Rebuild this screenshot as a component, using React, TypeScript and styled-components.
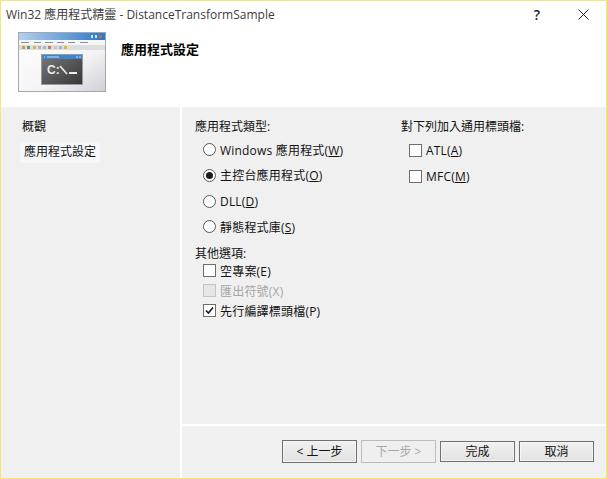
import React from "react";
import styled, { createGlobalStyle } from "styled-components";

const GlobalStyle = createGlobalStyle`
    html, body {
        margin: 0;
        padding: 0;
        width: 607px;
        height: 479px;
        overflow: hidden;
        background: #ffffff;
    }
`;

const FONT = `"Open Sans", "Noto Sans CJK TC", sans-serif`;

const Window = styled.div`
    box-sizing: border-box;
    width: 607px;
    height: 479px;
    display: flex;
    flex-direction: column;
    border: 1px solid #f0e97a;
    font-family: ${FONT};
    font-size: 12px;
    color: #111111;
    background: #ffffff;
`;

const TitleBar = styled.div`
    box-sizing: border-box;
    height: 29px;
    display: flex;
    align-items: center;
    padding: 0 0 3px 5px;
    flex: none;
`;

const TitleText = styled.div`
    flex: 1;
    font-size: 12px;
    color: #3c3c3c;
    white-space: nowrap;
`;

const TitleButton = styled.div`
    width: 46px;
    height: 26px;
    display: flex;
    align-items: center;
    justify-content: center;
    font-size: 14px;
    font-weight: 600;
    color: #222222;
`;

const Header = styled.div`
    box-sizing: border-box;
    height: 77px;
    flex: none;
    display: flex;
    align-items: flex-start;
    padding: 2px 0 0 17px;
    gap: 15px;
`;

const HeaderTitle = styled.div`
    margin-top: 7px;
    font-size: 13px;
    font-weight: 700;
    color: #000000;
`;

const Body = styled.div`
    flex: 1;
    display: flex;
    background: #f0f0f0;
    min-height: 0;
`;

const Sidebar = styled.div`
    width: 181px;
    flex: none;
    box-sizing: border-box;
    border-right: 2px solid #ffffff;
    padding: 10px 0 0 21px;
`;

const SideHeading = styled.div`
    height: 20px;
    line-height: 20px;
`;

const SideItem = styled.div`
    margin: 5px 0 0 -2px;
    width: 76px;
    height: 21px;
    line-height: 19px;
    padding-left: 4px;
    background: #f5f7fb;
    border-radius: 2px;
`;

const Content = styled.div`
    flex: 1;
    display: flex;
    flex-direction: column;
    min-width: 0;
`;

const Options = styled.div`
    flex: 1;
    display: grid;
    grid-template-columns: 206px 1fr;
    padding: 11px 0 0 13px;
`;

const Column = styled.div`
    display: flex;
    flex-direction: column;
`;

const GroupLabel = styled.div<{ $top?: number; $h?: number }>`
    height: ${(p) => p.$h ?? 19}px;
    line-height: 18px;
    margin-top: ${(p) => p.$top ?? 0}px;
`;

const OptionRow = styled.label<{ $h: number; $disabled?: boolean }>`
    display: flex;
    align-items: center;
    gap: 4px;
    height: ${(p) => p.$h}px;
    padding-left: 8px;
    color: ${(p) => (p.$disabled ? "#a6a6a6" : "#111111")};
`;

const RadioMark = styled.span<{ $on?: boolean }>`
    box-sizing: border-box;
    width: 13px;
    height: 13px;
    flex: none;
    border-radius: 50%;
    border: 1px solid #5a5a5a;
    background: #ffffff;
    display: flex;
    align-items: center;
    justify-content: center;
    &::after {
        content: "";
        width: 7px;
        height: 7px;
        border-radius: 50%;
        background: ${(p) => (p.$on ? "#1c1c1c" : "transparent")};
    }
`;

const CheckMark = styled.span<{ $disabled?: boolean }>`
    box-sizing: border-box;
    width: 13px;
    height: 13px;
    flex: none;
    border: 1px solid ${(p) => (p.$disabled ? "#c4c4c4" : "#6e6e6e")};
    background: ${(p) => (p.$disabled ? "#e6e6e6" : "#ffffff")};
    display: flex;
    align-items: center;
    justify-content: center;
    svg {
        display: block;
    }
`;

const OptionText = styled.span`
    white-space: nowrap;
    letter-spacing: 0.2px;
`;

const Key = styled.span`
    text-decoration: underline;
    text-underline-offset: 1px;
`;

const Footer = styled.div`
    box-sizing: border-box;
    flex: none;
    height: 54px;
    border-top: 2px solid #ffffff;
    display: flex;
    align-items: flex-start;
    justify-content: flex-end;
    gap: 4px;
    padding: 14px 12px 0 0;
`;

const Button = styled.div<{ $tall?: boolean; $disabled?: boolean }>`
    box-sizing: border-box;
    width: 75px;
    height: ${(p) => (p.$tall ? 23 : 21)}px;
    margin-top: ${(p) => (p.$tall ? 0 : 1)}px;
    padding-bottom: 2px;
    display: flex;
    align-items: center;
    justify-content: center;
    border: 1px solid ${(p) => (p.$disabled ? "#bcbcbc" : "#707070")};
    background: ${(p) => (p.$disabled ? "#efefef" : "linear-gradient(#f0f0f0, #e3e3e3)")};
    box-shadow: inset 0 0 0 1px ${(p) => (p.$disabled ? "#f0f0f0" : "#f4f4f4")};
    color: ${(p) => (p.$disabled ? "#a8a8a8" : "#111111")};
`;

const AppIcon = () => (
    <svg width="88" height="60" viewBox="0 0 88 60">
        <defs>
            <linearGradient id="bar" x1="0" x2="1" y1="0" y2="0">
                <stop offset="0" stopColor="#b4cfec" />
                <stop offset="1" stopColor="#2b78c8" />
            </linearGradient>
            <linearGradient id="page" x1="0" x2="1" y1="0" y2="1">
                <stop offset="0" stopColor="#ffffff" />
                <stop offset="0.6" stopColor="#f4f4f6" />
                <stop offset="1" stopColor="#cfcfd6" />
            </linearGradient>
            <linearGradient id="term" x1="0" x2="1" y1="0" y2="1">
                <stop offset="0" stopColor="#7a7a7a" />
                <stop offset="1" stopColor="#363636" />
            </linearGradient>
        </defs>
        <rect x="0.5" y="0.5" width="87" height="59" fill="url(#page)" stroke="#a3a7b0" />
        <rect x="1" y="1" width="86" height="7" fill="url(#bar)" />
        <rect x="73" y="3" width="2" height="3" fill="#cfe0f2" />
        <rect x="77" y="3" width="2" height="3" fill="#cfe0f2" />
        <rect x="81" y="3" width="3" height="3" fill="#c8694e" />
        <rect x="1" y="8" width="86" height="5" fill="#f6f6f6" />
        <path d="M3 10.5h8M16 10.5h7M27 10.5h8M39 10.5h7M50 10.5h7M62 10.5h8" stroke="#8f8f8f" strokeWidth="1" />
        <rect x="1" y="13" width="86" height="5" fill="#dedede" />
        <rect x="4" y="14" width="3" height="3" fill="#d89a4c" />
        <rect x="9" y="14" width="3" height="3" fill="#5f9a7a" />
        <rect x="15" y="14" width="3" height="3" fill="#d9b35a" />
        <rect x="20" y="14" width="3" height="3" fill="#b5b5b5" />
        <rect x="25" y="14" width="3" height="3" fill="#b5b5b5" />
        <rect x="30" y="14" width="3" height="3" fill="#d07a4a" />
        <rect x="36" y="14" width="3" height="3" fill="#c9c9c9" />
        <rect x="41" y="14" width="3" height="3" fill="#b5b5b5" />
        <rect x="46" y="14" width="3" height="3" fill="#e0b93a" />
        <rect x="23.5" y="22.5" width="41" height="30" fill="url(#term)" stroke="#9a9a9a" />
        <rect x="24" y="23" width="40" height="4" fill="#3a86d0" />
        <path d="M26 25h1M29 25h12M58 25h2M61 25h2" stroke="#cfe0f2" />
        <text x="29" y="42" fontFamily="'Liberation Sans', sans-serif" fontSize="12" fontWeight="700" fill="#ececec">
            C:
        </text>
        <path d="M42 34l7 8" stroke="#ececec" strokeWidth="1.6" />
        <rect x="51" y="40" width="8" height="2" fill="#ececec" />
    </svg>
);

const CloseGlyph = () => (
    <svg width="11" height="11" viewBox="0 0 11 11">
        <path d="M0.5 0.5l10 10M10.5 0.5l-10 10" stroke="#222222" strokeWidth="1" fill="none" />
    </svg>
);

const Tick = () => (
    <svg width="9" height="9" viewBox="0 0 9 9">
        <path d="M1 4.5l2.4 2.6L8 1.5" stroke="#1c1c1c" strokeWidth="1.6" fill="none" />
    </svg>
);

const Radio = ({ on, children }: { on?: boolean; children: React.ReactNode }) => (
    <OptionRow $h={25.67}>
        <RadioMark $on={on} />
        <OptionText>{children}</OptionText>
    </OptionRow>
);

const Check = ({
    h,
    checked,
    disabled,
    children,
}: {
    h: number;
    checked?: boolean;
    disabled?: boolean;
    children: React.ReactNode;
}) => (
    <OptionRow $h={h} $disabled={disabled}>
        <CheckMark $disabled={disabled}>{checked && <Tick />}</CheckMark>
        <OptionText>{children}</OptionText>
    </OptionRow>
);

export default function App() {
    return (
        <>
            <GlobalStyle />
            <Window>
                <TitleBar>
                    <TitleText>Win32 應用程式精靈 - DistanceTransformSample</TitleText>
                    <TitleButton>?</TitleButton>
                    <TitleButton>
                        <CloseGlyph />
                    </TitleButton>
                </TitleBar>
                <Header>
                    <AppIcon />
                    <HeaderTitle>應用程式設定</HeaderTitle>
                </Header>
                <Body>
                    <Sidebar>
                        <SideHeading>概觀</SideHeading>
                        <SideItem>應用程式設定</SideItem>
                    </Sidebar>
                    <Content>
                        <Options>
                            <Column>
                                <GroupLabel>應用程式類型:</GroupLabel>
                                <Radio>
                                    Windows 應用程式(<Key>W</Key>)
                                </Radio>
                                <Radio on>
                                    主控台應用程式(<Key>O</Key>)
                                </Radio>
                                <Radio>
                                    DLL(<Key>D</Key>)
                                </Radio>
                                <Radio>
                                    靜態程式庫(<Key>S</Key>)
                                </Radio>
                                <GroupLabel $top={5} $h={16}>
                                    其他選項:
                                </GroupLabel>
                                <Check h={20}>空專案(E)</Check>
                                <Check h={20} disabled>
                                    匯出符號(X)
                                </Check>
                                <Check h={20} checked>
                                    先行編譯標頭檔(P)
                                </Check>
                            </Column>
                            <Column>
                                <GroupLabel>對下列加入通用標頭檔:</GroupLabel>
                                <Check h={26}>
                                    ATL(<Key>A</Key>)
                                </Check>
                                <Check h={26}>
                                    MFC(<Key>M</Key>)
                                </Check>
                            </Column>
                        </Options>
                        <Footer>
                            <Button $tall>&lt; 上一步</Button>
                            <Button $tall $disabled>
                                下一步 &gt;
                            </Button>
                            <Button>完成</Button>
                            <Button>取消</Button>
                        </Footer>
                    </Content>
                </Body>
            </Window>
        </>
    );
}
